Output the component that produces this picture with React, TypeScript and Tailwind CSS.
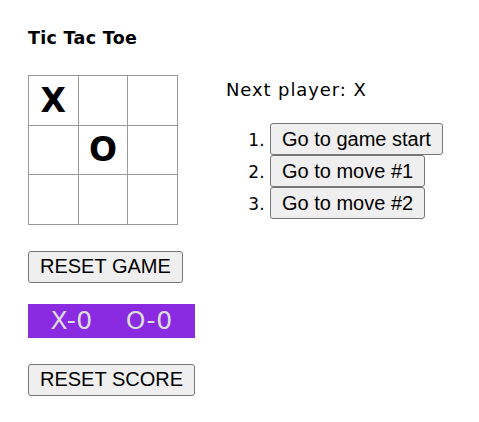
import React from 'react';

const board = ['X', '', '', '', 'O', '', '', '', ''];
const moves = ['Go to game start', 'Go to move #1', 'Go to move #2'];

const gothic = 'font-["Century_Gothic","DejaVu_Sans",sans-serif]';
const arial = 'font-["Liberation_Sans",Arial,sans-serif]';
const btn = `px-[11px] py-[3.5px] bg-[#efefef] border border-[#767676] rounded-[3px] text-[20px] leading-[23px] text-black ${arial}`;

const Square: React.FC<{ value: string }> = ({ value }) => (
  <button
    className={`w-[50.67px] h-[50.67px] -mr-px -mt-px bg-white border border-[#999] flex items-center justify-center text-[33px] font-bold leading-none text-black ${gothic}`}
  >
    {value}
  </button>
);

const App: React.FC = () => {
  return (
    <div className={`w-[479px] h-[422px] bg-white pt-[26px] pl-[28px] text-black ${gothic}`}>
      <h1 className="text-[17.5px] font-bold leading-[24px] tracking-[0.3px]">Tic Tac Toe</h1>

      <div className="flex mt-[25px]">
        <div className="pt-px">
          {[0, 1, 2].map((r) => (
            <div key={r} className="flex">
              {board.slice(r * 3, r * 3 + 3).map((v, i) => (
                <Square key={i} value={v} />
              ))}
            </div>
          ))}
        </div>

        <div className="ml-[49px] pt-[3px]">
          <div className="text-[18px] leading-[24px] tracking-[0.9px]">Next player: X</div>
          <ol className="list-decimal pl-[44px] mt-[21px] text-[17px]">
            {moves.map((m) => (
              <li key={m} className="leading-none">
                <button className={btn}>{m}</button>
              </li>
            ))}
          </ol>
        </div>
      </div>

      <button className={`mt-[26px] ${btn}`}>RESET GAME</button>

      <div className="mt-[21px] w-[167px] h-[34px] bg-[#8a2be2] flex items-center justify-center gap-[33px] text-[25px] tracking-[0.5px] text-[#ddd]">
        <span>X-0</span>
        <span>O-0</span>
      </div>

      <button className={`mt-[26px] ${btn}`}>RESET SCORE</button>
    </div>
  );
};

export default App;
